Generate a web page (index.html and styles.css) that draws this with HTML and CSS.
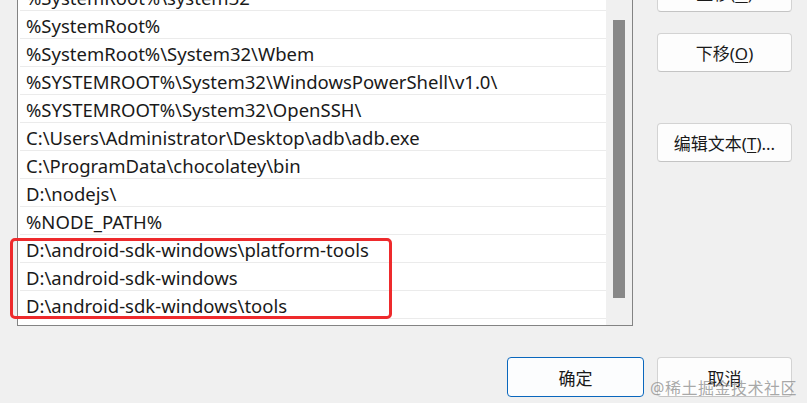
FILE: index.html
```html
<!DOCTYPE html>
<html lang="zh-CN">
<head>
  <meta charset="UTF-8" />
  <meta name="viewport" content="width=device-width, initial-scale=1.0"/>
  <title>编辑环境变量</title>
  <link rel="stylesheet" href="styles.css">
</head>
<body>

  <div class="dialog">
    <div class="main">
      <div class="listbox">
        <ul class="paths">
          <li>%SystemRoot%\system32</li>
          <li>%SystemRoot%</li>
          <li>%SystemRoot%\System32\Wbem</li>
          <li>%SYSTEMROOT%\System32\WindowsPowerShell\v1.0\</li>
          <li>%SYSTEMROOT%\System32\OpenSSH\</li>
          <li>C:\Users\Administrator\Desktop\adb\adb.exe</li>
          <li>C:\ProgramData\chocolatey\bin</li>
          <li>D:\nodejs\</li>
          <li>%NODE_PATH%</li>
          <li>D:\android-sdk-windows\platform-tools</li>
          <li>D:\android-sdk-windows</li>
          <li>D:\android-sdk-windows\tools</li>
        </ul>
        <div class="scrollbar">
          <div class="thumb"></div>
        </div>
      </div>

      <div class="side">
        <button class="btn">上移(<u>U</u>)</button>
        <button class="btn">下移(<u>O</u>)</button>
        <button class="btn edit-text">编辑文本(<u>T</u>)...</button>
      </div>
    </div>

    <div class="footer">
      <button class="btn btn-default">确定</button>
      <button class="btn">取消</button>
    </div>

    <!-- annotation drawn over the list -->
    <div class="highlight"></div>
    <div class="watermark">@稀土掘金技术社区</div>
  </div>

</body>
</html>
```

FILE: styles.css
```css
body {
  margin: 0;
  padding: 0;
  background: #f0f0f0;
  color: #1a1a1a;
  font-family: 'Noto Sans', 'Noto Sans CJK SC', sans-serif;
  font-size: 18.5px;
  overflow: hidden;
}

.dialog {
  position: relative;
  display: flow-root;
  height: 403px;
}

.main {
  display: flex;
  align-items: flex-start;
  margin-top: -27px;
}

/* Path list */
.listbox {
  display: flex;
  width: 614px;
  height: 344px;
  margin: 7px 0 0 17px;
  background: #fff;
  border: 1px solid #838383;
}

.paths {
  flex: 1;
  list-style: none;
  margin: 0;
  padding: 2px 0 0 2px;
}

.paths li {
  height: 27px;
  line-height: 29px;
  padding-left: 6px;
  border-bottom: 1px solid #ebebeb;
  white-space: nowrap;
}

.scrollbar {
  width: 26px;
  background: #f0f0f0;
  display: flex;
  justify-content: center;
}

.scrollbar .thumb {
  width: 12px;
  height: 278px;
  margin-top: 39px;
  background: #888;
}

/* Buttons */
.side {
  display: flex;
  flex-direction: column;
  gap: 21px;
  margin-left: 24px;
}

.btn {
  font-family: inherit;
  font-size: 17px;
  color: #1a1a1a;
  width: 135px;
  height: 39px;
  padding: 0;
  background: #fdfdfd;
  border: 1px solid #d3d3d3;
  border-bottom-color: #c4c4c4;
  border-radius: 4px;
}

.btn u {
  text-underline-offset: 2px;
}

.side .edit-text {
  margin-top: 30px;
}

.footer {
  display: flex;
  justify-content: flex-end;
  gap: 13px;
  padding: 31px 15px 0 0;
}

.footer .btn {
  height: 40px;
}

.btn-default {
  width: 137px;
  border: 1px solid #0a67bd;
  background: #fcfdfe;
}

/* Red annotation box */
.highlight {
  position: absolute;
  left: 10px;
  top: 238px;
  width: 376px;
  height: 75px;
  border: 3px solid #ee2a2c;
  border-radius: 5px;
}

.watermark {
  position: absolute;
  left: 650px;
  top: 375px;
  font-size: 16px;
  letter-spacing: 0.5px;
  color: rgba(140, 140, 140, 0.75);
}
```
